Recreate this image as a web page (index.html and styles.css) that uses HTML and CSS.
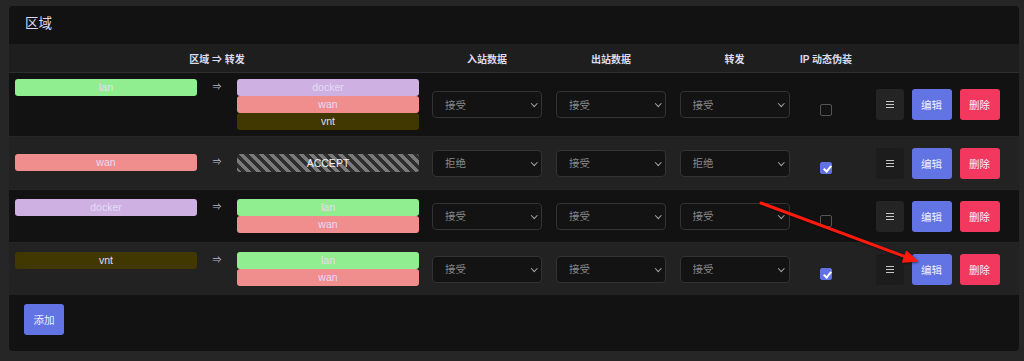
FILE: index.html
```html
<!DOCTYPE html>
<html lang="zh-CN">
<head>
    <meta charset="UTF-8">
    <meta name="viewport" content="width=device-width, initial-scale=1.0">
    <title>区域</title>
    <link rel="stylesheet" href="styles.css">
</head>
<body>
    <!-- 区域列表 -->
    <div class="card">
        <div class="card-title">区域</div>
        <table class="zones">
            <colgroup>
                <col style="width: 416px">
                <col style="width: 124px">
                <col style="width: 124px">
                <col style="width: 123px">
                <col style="width: 60px">
                <col style="width: 163px">
            </colgroup>
            <thead>
                <tr>
                    <th>区域 ⇒ 转发</th>
                    <th>入站数据</th>
                    <th>出站数据</th>
                    <th>转发</th>
                    <th>IP 动态伪装</th>
                    <th></th>
                </tr>
            </thead>
            <tbody>
                <tr>
                    <td>
                        <div class="forward">
                            <div class="tags"><span class="tag tag-lan">lan</span></div>
                            <span class="arrow">⇒</span>
                            <div class="tags">
                                <span class="tag tag-docker">docker</span>
                                <span class="tag tag-wan">wan</span>
                                <span class="tag tag-vnt">vnt</span>
                            </div>
                        </div>
                    </td>
                    <td><div class="select"><select><option>接受</option></select></div></td>
                    <td><div class="select"><select><option>接受</option></select></div></td>
                    <td><div class="select"><select><option>接受</option></select></div></td>
                    <td><div class="check"><input type="checkbox"></div></td>
                    <td>
                        <div class="actions">
                            <button class="btn btn-menu"><svg width="8" height="7" viewBox="0 0 8 7"><path d="M0 .5h8M0 3.5h8M0 6.5h8" stroke="#c8c8c8" stroke-width="1"/></svg></button>
                            <button class="btn btn-edit">编辑</button>
                            <button class="btn btn-delete">删除</button>
                        </div>
                    </td>
                </tr>
                <tr>
                    <td>
                        <div class="forward">
                            <div class="tags"><span class="tag tag-wan">wan</span></div>
                            <span class="arrow">⇒</span>
                            <div class="tags">
                                <span class="tag tag-accept">ACCEPT</span>
                            </div>
                        </div>
                    </td>
                    <td><div class="select"><select><option>拒绝</option></select></div></td>
                    <td><div class="select"><select><option>接受</option></select></div></td>
                    <td><div class="select"><select><option>拒绝</option></select></div></td>
                    <td><div class="check"><input type="checkbox" checked></div></td>
                    <td>
                        <div class="actions">
                            <button class="btn btn-menu"><svg width="8" height="7" viewBox="0 0 8 7"><path d="M0 .5h8M0 3.5h8M0 6.5h8" stroke="#c8c8c8" stroke-width="1"/></svg></button>
                            <button class="btn btn-edit">编辑</button>
                            <button class="btn btn-delete">删除</button>
                        </div>
                    </td>
                </tr>
                <tr>
                    <td>
                        <div class="forward">
                            <div class="tags"><span class="tag tag-docker">docker</span></div>
                            <span class="arrow">⇒</span>
                            <div class="tags">
                                <span class="tag tag-lan">lan</span>
                                <span class="tag tag-wan">wan</span>
                            </div>
                        </div>
                    </td>
                    <td><div class="select"><select><option>接受</option></select></div></td>
                    <td><div class="select"><select><option>接受</option></select></div></td>
                    <td><div class="select"><select><option>接受</option></select></div></td>
                    <td><div class="check"><input type="checkbox"></div></td>
                    <td>
                        <div class="actions">
                            <button class="btn btn-menu"><svg width="8" height="7" viewBox="0 0 8 7"><path d="M0 .5h8M0 3.5h8M0 6.5h8" stroke="#c8c8c8" stroke-width="1"/></svg></button>
                            <button class="btn btn-edit">编辑</button>
                            <button class="btn btn-delete">删除</button>
                        </div>
                    </td>
                </tr>
                <tr>
                    <td>
                        <div class="forward">
                            <div class="tags"><span class="tag tag-vnt">vnt</span></div>
                            <span class="arrow">⇒</span>
                            <div class="tags">
                                <span class="tag tag-lan">lan</span>
                                <span class="tag tag-wan">wan</span>
                            </div>
                        </div>
                    </td>
                    <td><div class="select"><select><option>接受</option></select></div></td>
                    <td><div class="select"><select><option>接受</option></select></div></td>
                    <td><div class="select"><select><option>接受</option></select></div></td>
                    <td><div class="check"><input type="checkbox" checked></div></td>
                    <td>
                        <div class="actions">
                            <button class="btn btn-menu"><svg width="8" height="7" viewBox="0 0 8 7"><path d="M0 .5h8M0 3.5h8M0 6.5h8" stroke="#c8c8c8" stroke-width="1"/></svg></button>
                            <button class="btn btn-edit">编辑</button>
                            <button class="btn btn-delete">删除</button>
                        </div>
                    </td>
                </tr>
            </tbody>
        </table>
        <div class="card-footer">
            <button class="btn btn-edit">添加</button>
        </div>
    </div>

    <!-- 标注箭头 -->
    <svg class="annotation" width="1024" height="361" viewBox="0 0 1024 361">
        <line x1="761" y1="203" x2="905" y2="256.6" stroke="#ff1a0d" stroke-width="3" stroke-linecap="round"/>
        <polygon points="917,261 902.8,262 906.6,251.6" fill="#ff1a0d" stroke="#ff1a0d" stroke-width="1.5" stroke-linejoin="round"/>
    </svg>
</body>
</html>
```

FILE: styles.css
```css
body {
    font-family: "Liberation Sans", "Noto Sans CJK SC", sans-serif;
    font-size: 10.5px;
    margin: 0;
    padding: 6px 5px 10px 9px;
    background-color: #262626;
    color: #ddd;
    position: relative;
}
.card {
    width: 1010px;
    height: 345px;
    background: #121212;
    border-radius: 4px;
    overflow: hidden;
}
.card-title {
    height: 38px;
    padding-left: 16px;
    line-height: 36px;
    font-size: 13.5px;
    color: #ddd8f6;
}
.zones {
    width: 1010px;
    table-layout: fixed;
    border-collapse: collapse;
}
.zones th {
    height: 28px;
    padding: 0;
    background: #1e1e1f;
    border-bottom: 1px solid #2e2e2e;
    font-size: 10px;
    font-weight: bold;
    color: #dcdcf0;
    text-align: center;
}
.zones td {
    padding: 6px;
    border-top: 1px solid #262626;
    vertical-align: middle;
    text-align: center;
}
.zones tbody tr:first-child td {
    border-top: none;
}
.zones tbody tr:nth-child(even) td {
    background: #222222;
}
.forward {
    display: flex;
    align-items: flex-start;
}
.forward .tags {
    width: 182px;
    display: flex;
    flex-direction: column;
}
.arrow {
    width: 40px;
    font-size: 9px;
    line-height: 16px;
    color: #b4b4cc;
}
.tag {
    display: block;
    height: 17px;
    line-height: 17px;
    border-radius: 3px;
    color: #e2dcf6;
    font-size: 10.5px;
}
.tag-lan { background: #90ee90; }
.tag-docker { background: #cfb0e2; }
.tag-wan { background: #f08e8e; }
.tag-vnt { background: #403800; }
.tag-accept {
    height: 18px;
    line-height: 18px;
    color: #eee;
    background: repeating-linear-gradient(45deg, #7a7a7a 0, #7a7a7a 3.5px, #2e2e2e 3.5px, #2e2e2e 7px);
}
.select {
    position: relative;
    width: 110px;
    margin: 0 auto;
}
.select select {
    appearance: none;
    -webkit-appearance: none;
    width: 110px;
    height: 27px;
    padding: 0 0 0 12px;
    background: #131313;
    border: 1px solid #333;
    border-radius: 4px;
    color: #888;
    font-family: inherit;
    font-size: 10.5px;
}
.select::after {
    content: "";
    position: absolute;
    right: 6px;
    top: 10px;
    width: 3.5px;
    height: 3.5px;
    border-right: 1px solid #aaa;
    border-bottom: 1px solid #aaa;
    transform: rotate(45deg);
    pointer-events: none;
}
.check {
    height: 40px;
    display: flex;
    justify-content: center;
}
.check input {
    appearance: none;
    -webkit-appearance: none;
    width: 12px;
    height: 12px;
    margin: 19px 0 0;
    border: 1px solid #555;
    border-radius: 2px;
    background: transparent;
    position: relative;
}
.check input:checked {
    background: #6272e4;
    border-color: #6272e4;
}
.check input:checked::after {
    content: "";
    position: absolute;
    left: 3.5px;
    top: 1px;
    width: 3px;
    height: 6px;
    border-right: 2px solid #fff;
    border-bottom: 2px solid #fff;
    transform: rotate(40deg);
}
.actions {
    display: flex;
    justify-content: center;
    gap: 8px;
}
.btn {
    height: 31px;
    width: 40px;
    border: none;
    border-radius: 3px;
    color: #f0eefc;
    font-family: inherit;
    font-size: 10.5px;
    cursor: pointer;
}
.btn-menu {
    width: 28px;
    background: #242424;
    display: flex;
    align-items: center;
    justify-content: center;
}
.zones tbody tr:nth-child(even) .btn-menu {
    background: #1c1c1c;
}
.btn-edit {
    background: #6273e3;
}
.btn-delete {
    background: #f3385f;
}
.card-footer {
    padding: 9px 15px;
}
.annotation {
    position: absolute;
    left: 0;
    top: 0;
    pointer-events: none;
    filter: drop-shadow(1px 1px 1px rgba(0, 0, 0, 0.5));
}
```
